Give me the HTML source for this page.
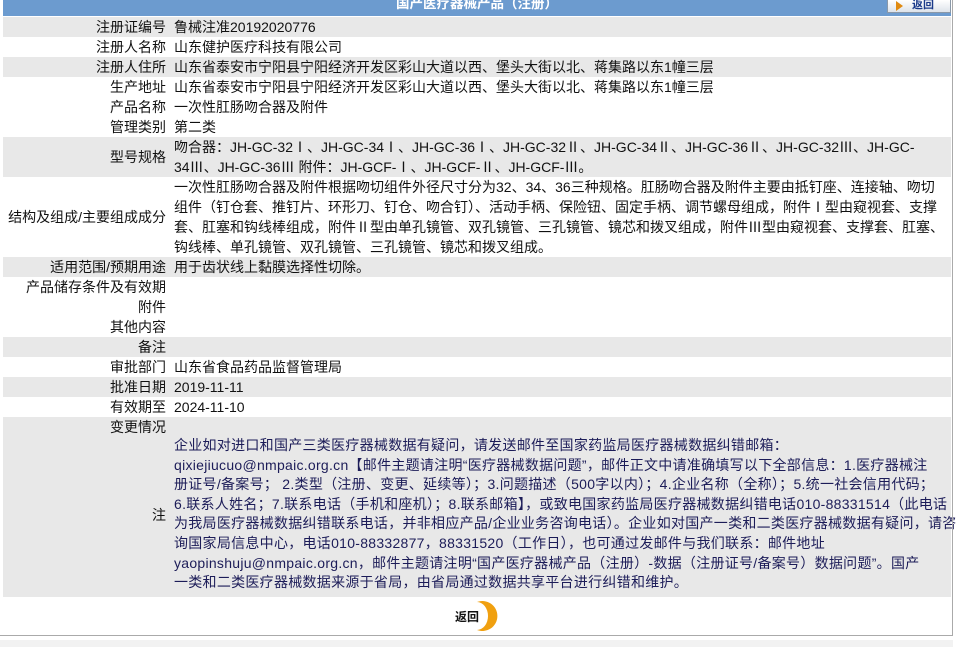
<!DOCTYPE html>
<html><head><meta charset="utf-8"><style>
body{margin:0;width:967px;height:647px;background:#fff;font-family:"Liberation Sans","Noto Sans CJK SC",sans-serif;font-size:14px;color:#111;position:relative;overflow:hidden}
.hd{position:absolute;left:3px;top:0;width:948px;height:16px;background:#6c9bcf;color:#fff;font-weight:bold;text-align:center;line-height:8px;font-size:13.5px}
.btn{position:absolute;left:887px;top:0;width:62px;height:12px;background:linear-gradient(#fff,#dde3ea);border:1px solid #8a98a8;border-top:none;font-size:11px;line-height:10px;font-weight:bold;color:#1a3a8a}
.btn i{position:absolute;left:8px;top:1px;width:0;height:0;border-left:7px solid #e08a10;border-top:5px solid transparent;border-bottom:5px solid transparent}
.btn span{position:absolute;left:24px;top:0}
.r{position:absolute;left:3px;width:948px}
.g{background:#e8e8e8}
.l{position:absolute;right:785px;white-space:nowrap;text-align:right}
.v{position:absolute;left:171px;white-space:nowrap;line-height:20px}
.n{color:#1c1c58;letter-spacing:0.28px}
.vl{position:absolute;left:952px;top:0;width:1px;height:636px;background:#aaa}
.bl{position:absolute;left:0;top:635px;width:953px;height:1px;background:#aaa}
.bg{position:absolute;left:0;top:640px;width:953px;height:7px;background:#f2f2f2}
.ret{position:absolute;left:455px;top:600px;width:44px;height:32px}
</style></head><body>
<div class="hd">国产医疗器械产品（注册）</div>
<div class="btn"><i></i><span>返回</span></div>

<div class="r g" style="top:17px;height:20px"><div class="l" style="top:0;line-height:20px">注册证编号</div><div class="v" style="top:0">鲁械注准20192020776</div></div>
<div class="r" style="top:37px;height:20px"><div class="l" style="line-height:20px">注册人名称</div><div class="v">山东健护医疗科技有限公司</div></div>
<div class="r g" style="top:57px;height:20px"><div class="l" style="line-height:20px">注册人住所</div><div class="v">山东省泰安市宁阳县宁阳经济开发区彩山大道以西、堡头大街以北、蒋集路以东1幢三层</div></div>
<div class="r" style="top:77px;height:20px"><div class="l" style="line-height:20px">生产地址</div><div class="v">山东省泰安市宁阳县宁阳经济开发区彩山大道以西、堡头大街以北、蒋集路以东1幢三层</div></div>
<div class="r" style="top:97px;height:20px"><div class="l" style="line-height:20px">产品名称</div><div class="v">一次性肛肠吻合器及附件</div></div>
<div class="r" style="top:117px;height:20px"><div class="l" style="line-height:20px">管理类别</div><div class="v">第二类</div></div>
<div class="r g" style="top:137px;height:40px"><div class="l" style="line-height:40px">型号规格</div><div class="v">吻合器：JH-GC-32Ⅰ、JH-GC-34Ⅰ、JH-GC-36Ⅰ、JH-GC-32Ⅱ、JH-GC-34Ⅱ、JH-GC-36Ⅱ、JH-GC-32Ⅲ、JH-GC-<br>34Ⅲ、JH-GC-36Ⅲ 附件：JH-GCF-Ⅰ、JH-GCF-Ⅱ、JH-GCF-Ⅲ。</div></div>
<div class="r" style="top:177px;height:80px"><div class="l" style="line-height:80px">结构及组成/主要组成成分</div><div class="v">一次性肛肠吻合器及附件根据吻切组件外径尺寸分为32、34、36三种规格。肛肠吻合器及附件主要由抵钉座、连接轴、吻切<br>组件（钉仓套、推钉片、环形刀、钉仓、吻合钉）、活动手柄、保险钮、固定手柄、调节螺母组成，附件Ⅰ型由窥视套、支撑<br>套、肛塞和钩线棒组成，附件Ⅱ型由单孔镜管、双孔镜管、三孔镜管、镜芯和拨叉组成，附件Ⅲ型由窥视套、支撑套、肛塞、<br>钩线棒、单孔镜管、双孔镜管、三孔镜管、镜芯和拨叉组成。</div></div>
<div class="r g" style="top:257px;height:20px"><div class="l" style="line-height:20px">适用范围/预期用途</div><div class="v">用于齿状线上黏膜选择性切除。</div></div>
<div class="r" style="top:277px;height:40px"><div class="l" style="line-height:20px">产品储存条件及有效期<br>附件</div></div>
<div class="r" style="top:317px;height:20px"><div class="l" style="line-height:20px">其他内容</div></div>
<div class="r g" style="top:337px;height:20px"><div class="l" style="line-height:20px">备注</div></div>
<div class="r" style="top:357px;height:20px"><div class="l" style="line-height:20px">审批部门</div><div class="v">山东省食品药品监督管理局</div></div>
<div class="r g" style="top:377px;height:20px"><div class="l" style="line-height:20px">批准日期</div><div class="v">2019-11-11</div></div>
<div class="r" style="top:397px;height:20px"><div class="l" style="line-height:20px">有效期至</div><div class="v">2024-11-10</div></div>
<div class="r g" style="top:417px;height:180px"><div class="l" style="line-height:20px">变更情况</div><div class="l" style="top:88px;line-height:20px">注</div>
<div class="v n" style="top:19px;line-height:19.6px">企业如对进口和国产三类医疗器械数据有疑问，请发送邮件至国家药监局医疗器械数据纠错邮箱：<br>qixiejiucuo@nmpaic.org.cn【邮件主题请注明“医疗器械数据问题”，邮件正文中请准确填写以下全部信息：1.医疗器械注<br>册证号/备案号； 2.类型（注册、变更、延续等）；3.问题描述（500字以内）；4.企业名称（全称）；5.统一社会信用代码；<br>6.联系人姓名；7.联系电话（手机和座机）；8.联系邮箱】，或致电国家药监局医疗器械数据纠错电话010-88331514（此电话<br>为我局医疗器械数据纠错联系电话，并非相应产品/企业业务咨询电话）。企业如对国产一类和二类医疗器械数据有疑问，请咨<br>询国家局信息中心，电话010-88332877，88331520（工作日），也可通过发邮件与我们联系：邮件地址<br>yaopinshuju@nmpaic.org.cn，邮件主题请注明“国产医疗器械产品（注册）-数据（注册证号/备案号）数据问题”。国产<br>一类和二类医疗器械数据来源于省局，由省局通过数据共享平台进行纠错和维护。</div></div>

<svg class="ret" viewBox="0 0 44 32"><path d="M22 2 A15 15 0 1 1 22 30 A11 14 0 1 0 22 2Z" fill="#f0a010"/><text x="0" y="21" font-size="12" font-weight="bold" fill="#111" font-family="Noto Sans CJK SC,sans-serif">返回</text></svg>
<div class="vl"></div><div class="bl"></div><div class="bg"></div>
</body></html>
